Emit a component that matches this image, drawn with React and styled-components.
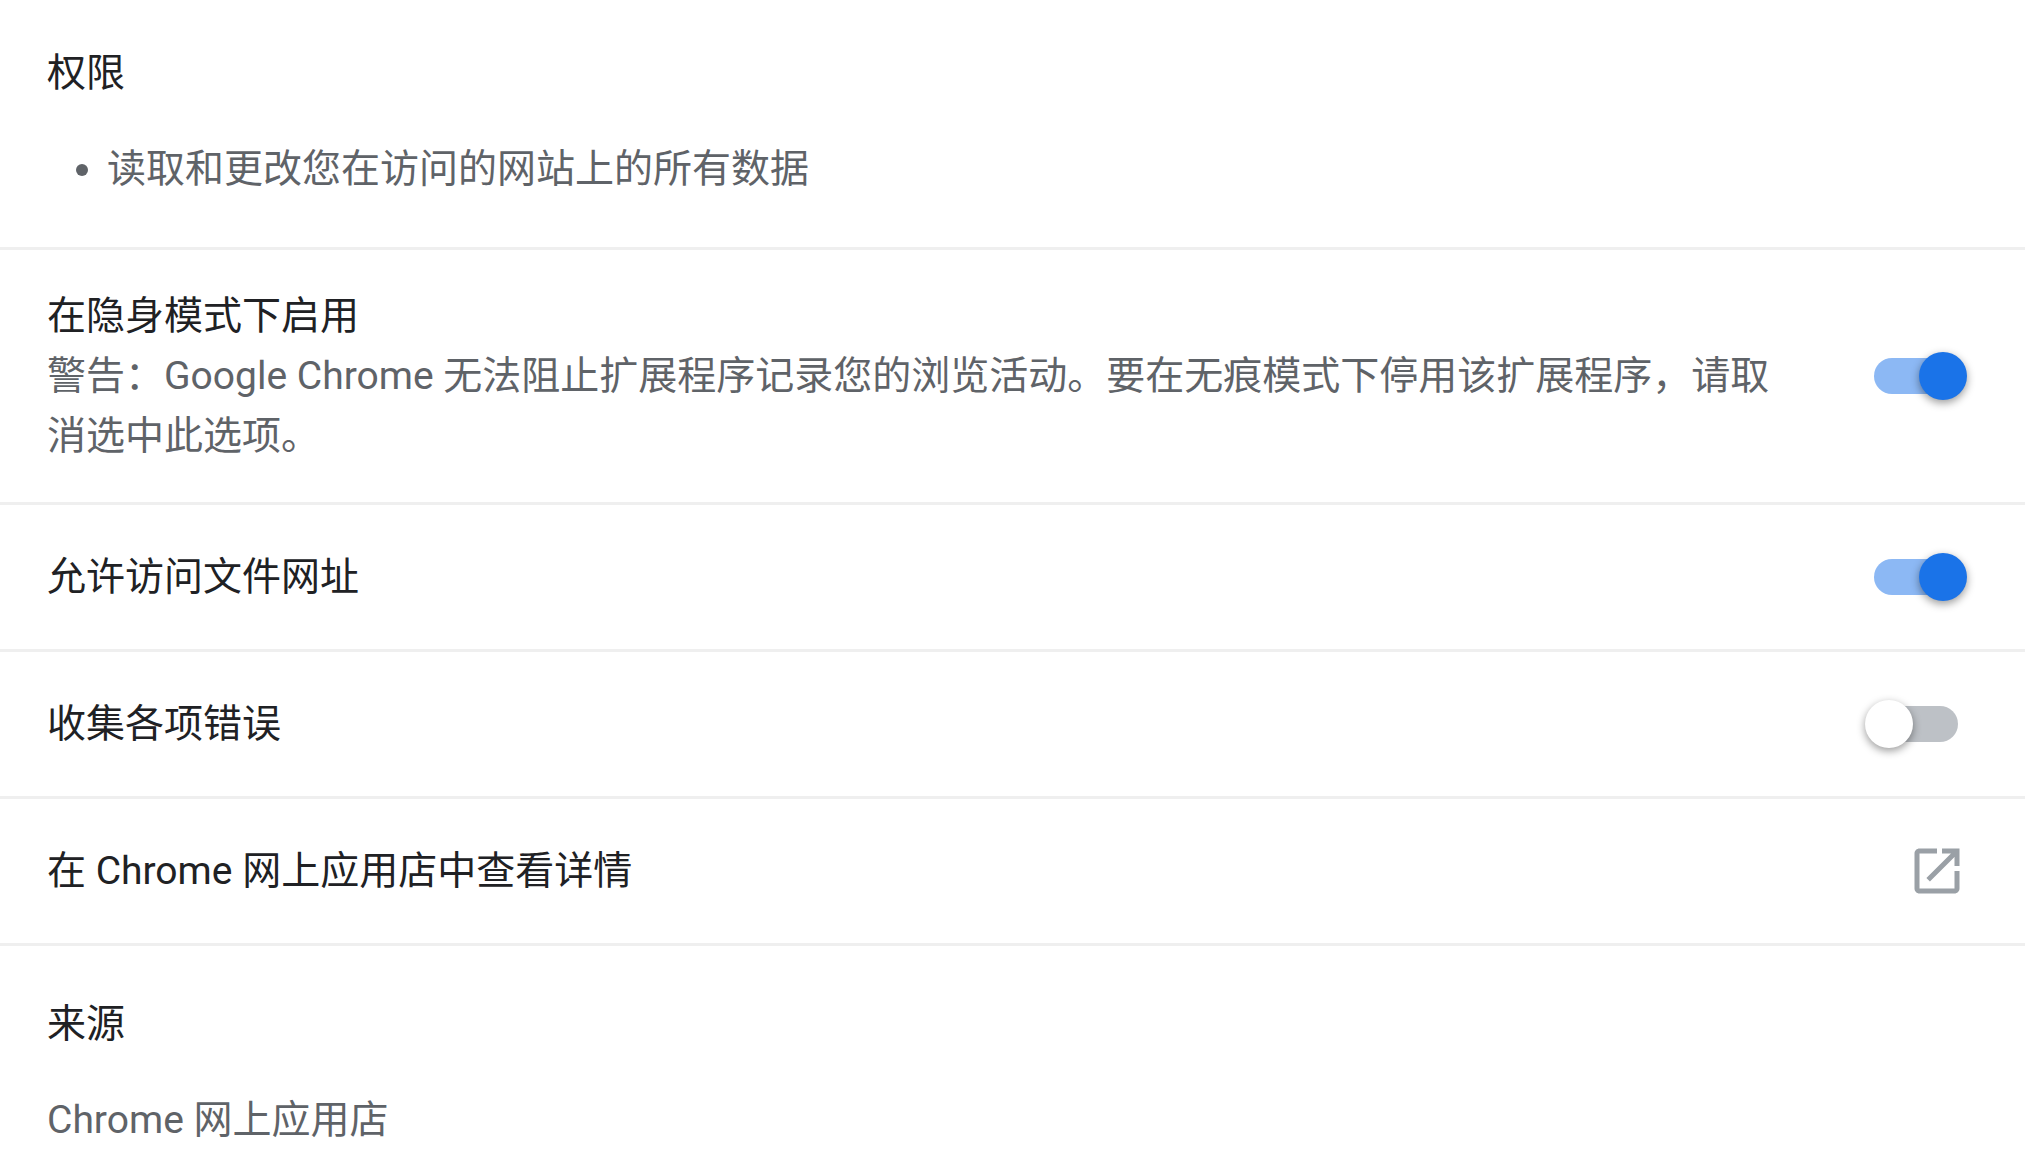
import React, { useState } from "react";
import styled, { createGlobalStyle } from "styled-components";

const GlobalStyle = createGlobalStyle`
  *, *::before, *::after { box-sizing: border-box; }
  body {
    margin: 0;
    background: #fff;
    color: #202124;
    font-family: Roboto, "Noto Sans CJK SC", sans-serif;
    font-size: 39px;
    line-height: 60px;
  }
`;

const Page = styled.main`
  display: flex;
  flex-direction: column;
`;

const Section = styled.section`
  display: flex;
  flex-direction: column;
  gap: 36px;
  padding: ${(p) => (p.$last ? "48px 58px 12px 47px" : "43px 58px 48px 47px")};
`;

const Title = styled.h2`
  margin: 0;
  font-size: inherit;
  font-weight: 400;
`;

const PermissionList = styled.ul`
  margin: 0;
  padding-left: 60px;
  color: #5f6368;
`;

const SourceText = styled.p`
  margin: 0;
  color: #5f6368;
`;

const Row = styled.div`
  display: flex;
  align-items: center;
  justify-content: space-between;
  gap: 72px;
  min-height: 147px;
  padding: 36px 58px 36px 47px;
  border-top: 3px solid #efefef;
  color: inherit;
  text-decoration: none;
`;

const Divider = styled.hr`
  width: 100%;
  height: 3px;
  margin: 0;
  border: 0;
  background: #efefef;
`;

const RowText = styled.span`
  display: flex;
  flex: 1;
  flex-direction: column;
  min-width: 0;
`;

const Description = styled.span`
  color: #5f6368;
`;

const Switch = styled.input`
  appearance: none;
  display: grid;
  flex: none;
  align-items: center;
  width: 102px;
  height: 48px;
  margin: 0;
  cursor: pointer;

  &::before,
  &::after {
    content: "";
    grid-area: 1 / 1;
  }

  &::before {
    justify-self: center;
    width: 84px;
    height: 36px;
    border-radius: 18px;
    background: #bdc1c6;
  }

  &::after {
    justify-self: start;
    width: 48px;
    height: 48px;
    border-radius: 50%;
    background: #fff;
    box-shadow: 0 3px 9px rgba(0, 0, 0, 0.4);
  }

  &:checked::before {
    background: #8cb8f4;
  }

  &:checked::after {
    justify-self: end;
    background: #1a73e8;
  }
`;

const LinkIcon = styled.svg`
  flex: none;
  width: 60px;
  height: 60px;
  fill: #9aa0a6;
`;

function ToggleRow({ title, description, initial }) {
  const [on, setOn] = useState(initial);
  return (
    <Row as="label">
      <RowText>
        <span>{title}</span>
        {description && <Description>{description}</Description>}
      </RowText>
      <Switch
        type="checkbox"
        role="switch"
        checked={on}
        onChange={(e) => setOn(e.target.checked)}
      />
    </Row>
  );
}

export default function App() {
  return (
    <Page lang="zh-CN">
      <GlobalStyle />
      <Section>
        <Title>权限</Title>
        <PermissionList>
          <li>读取和更改您在访问的网站上的所有数据</li>
        </PermissionList>
      </Section>
      <ToggleRow
        title="在隐身模式下启用"
        description="警告：Google Chrome 无法阻止扩展程序记录您的浏览活动。要在无痕模式下停用该扩展程序，请取消选中此选项。"
        initial={true}
      />
      <ToggleRow title="允许访问文件网址" initial={true} />
      <ToggleRow title="收集各项错误" initial={false} />
      <Row as="a" href="#webstore">
        <RowText>在 Chrome 网上应用店中查看详情</RowText>
        <LinkIcon viewBox="0 0 24 24" aria-hidden="true">
          <path d="M19 19H5V5h7V3H5c-1.11 0-2 .9-2 2v14c0 1.1.89 2 2 2h14c1.1 0 2-.9 2-2v-7h-2v7zM14 3v2h3.59l-9.83 9.83 1.41 1.41L19 6.41V10h2V3h-7z" />
        </LinkIcon>
      </Row>
      <Divider />
      <Section $last>
        <Title>来源</Title>
        <SourceText>Chrome 网上应用店</SourceText>
      </Section>
    </Page>
  );
}
